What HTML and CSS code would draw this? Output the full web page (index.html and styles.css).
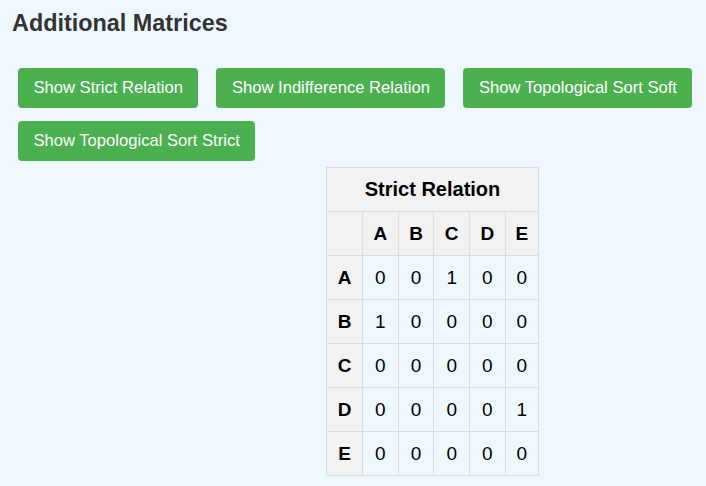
FILE: index.html
```html
<!DOCTYPE html>
<html>
<head>
<meta charset="utf-8">
<link rel="stylesheet" href="styles.css">
</head>
<body>
<h2 class="title">Additional Matrices</h2>
<div class="actions">
  <button class="btn">Show Strict Relation</button>
  <button class="btn">Show Indifference Relation</button>
  <button class="btn">Show Topological Sort Soft</button>
  <button class="btn">Show Topological Sort Strict</button>
</div>
<div class="matrix-wrap">
  <table class="matrix">
    <thead>
      <tr><th class="cap" colspan="6">Strict Relation</th></tr>
      <tr><th class="corner"></th><th>A</th><th>B</th><th>C</th><th>D</th><th>E</th></tr>
    </thead>
    <tbody>
      <tr><th class="rowh">A</th><td>0</td><td>0</td><td>1</td><td>0</td><td>0</td></tr>
      <tr><th class="rowh">B</th><td>1</td><td>0</td><td>0</td><td>0</td><td>0</td></tr>
      <tr><th class="rowh">C</th><td>0</td><td>0</td><td>0</td><td>0</td><td>0</td></tr>
      <tr><th class="rowh">D</th><td>0</td><td>0</td><td>0</td><td>0</td><td>1</td></tr>
      <tr><th class="rowh">E</th><td>0</td><td>0</td><td>0</td><td>0</td><td>0</td></tr>
    </tbody>
  </table>
</div>
</body>
</html>
```

FILE: styles.css
```css
html, body {
  background: #f0f8ff;
}
body {
  margin: 0;
  padding: 0 0 0 12px;
  font-family: "Liberation Sans", Arial, sans-serif;
}
.title {
  margin: 10px 0 0;
  font-size: 23.4px;
  line-height: 26px;
  font-weight: bold;
  color: #333;
}
.actions {
  display: flex;
  flex-wrap: wrap;
  gap: 13px 18px;
  margin-top: 32px;
  padding-left: 6px;
}
.btn {
  background: #4caf50;
  color: #fff;
  border: none;
  border-radius: 4px;
  font-family: "Liberation Sans", Arial, sans-serif;
  font-size: 16.6px;
  line-height: 20px;
  padding: 10px 15.5px;
  cursor: pointer;
}
.matrix-wrap {
  margin-top: 6px;
  padding-left: 314px;
}
.matrix {
  border-collapse: collapse;
  width: 213px;
  color: #000;
}
.matrix th, .matrix td {
  border: 1px solid #ddd;
  padding: 11px 0;
  line-height: 21px;
  font-size: 19px;
  text-align: center;
}
.matrix th {
  background: #f2f2f2;
  font-weight: bold;
}
.matrix th.cap {
  font-size: 20px;
}
.matrix th.corner, .matrix th.rowh {
  width: 35px;
}
```
